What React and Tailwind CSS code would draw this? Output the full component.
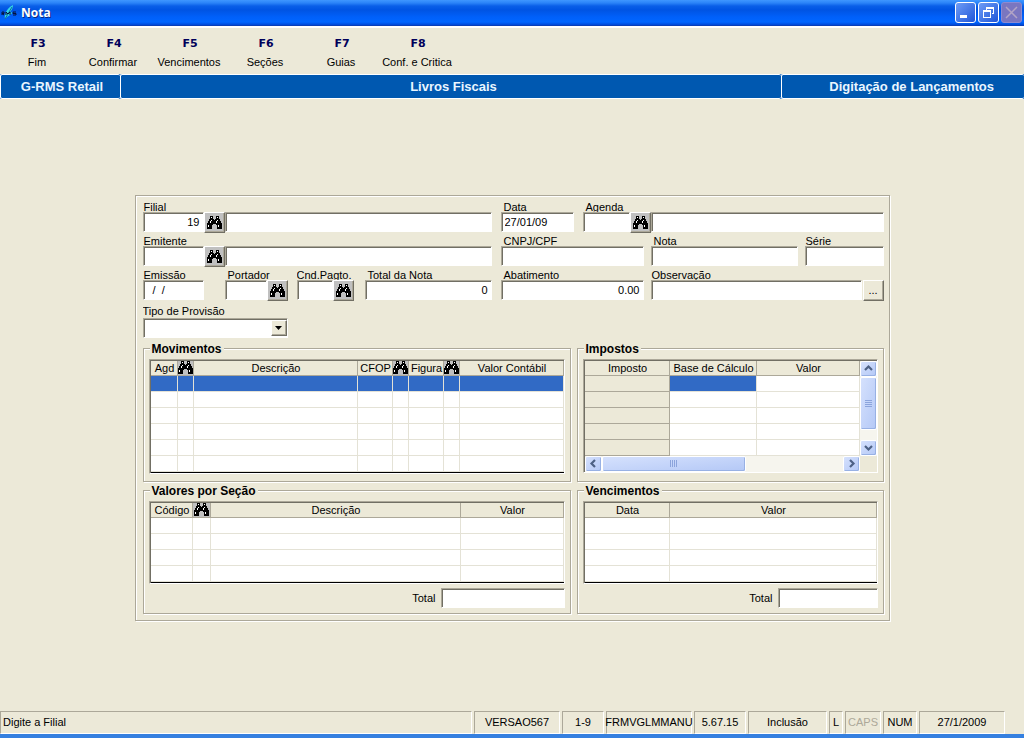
import clsx from "clsx";

/* ---------- shared class strings ---------- */
const etched = "border border-[#aca899] shadow-[1px_1px_0_#fff,inset_1px_1px_0_#fff]";
const sunken = "border border-t-[#aca899] border-l-[#aca899] border-r-white border-b-white shadow-[inset_1px_1px_0_#716f64]";
const raised = "border border-t-white border-l-white border-r-[#716f64] border-b-[#716f64] shadow-[inset_-1px_-1px_0_#aca899]";

const shortcuts = [
  { key: "F3", label: "Fim" },
  { key: "F4", label: "Confirmar" },
  { key: "F5", label: "Vencimentos" },
  { key: "F6", label: "Seções" },
  { key: "F7", label: "Guias" },
  { key: "F8", label: "Conf. e Critica" },
];

const statusItems = [
  { text: "VERSAO567", cls: "w-[86px]" },
  { text: "1-9", cls: "w-[42px]" },
  { text: "FRMVGLMMANU", cls: "w-[86px]" },
  { text: "5.67.15", cls: "w-[52px]" },
  { text: "Inclusão", cls: "w-[79px]" },
  { text: "L", cls: "w-[14px]" },
  { text: "CAPS", cls: "w-[36px] text-[#aca899]" },
  { text: "NUM", cls: "w-[34px]" },
  { text: "27/1/2009", cls: "w-[86px]" },
];

/* ---------- icons ---------- */
function Binoculars() {
  return (
    <svg width="15" height="13" viewBox="0 0 15 13" shapeRendering="crispEdges" className="mx-auto block shrink-0">
      <path
        d="M3 0h3v3h1v1h1v-1h1v-3h3v3h1v2h1v2h1v6h-5v-4h-1v-1h-3v1h-1v4h-5v-6h1v-2h1v-2h1z"
        fill="#000"
      />
      <path d="M4 1h1v1h-1zM10 1h1v1h-1zM4 4h1v1h-1zM3 5h1v2h-1zM10 4h1v1h-1zM9 5h1v2h-1zM1 9h1v2h-1zM11 9h1v2h-1z" fill="#fff" />
    </svg>
  );
}

function RmsLogo() {
  return (
    <svg width="18" height="18" viewBox="0 0 18 18" className="block shrink-0">
      <path d="M5 15 C4 10 7 4 13 1 C13 5 11 7 9 9 L13 8 C11 11 8 12 7 13 Z" fill="#35d6e6" />
      <path d="M5 15 L12 3" stroke="#0b6f9a" strokeWidth="1" />
      <path d="M2 11V8h2v1.500H2L4 11M6 11V8l2 2L10 8v3M16 8h-3v1.500h3V11h-3" stroke="#06123c" strokeWidth="1" fill="none" />
    </svg>
  );
}

function Chevron({ dir }) {
  const d = {
    up: "M1 6l3.500-3.500L8 6",
    down: "M1 3l3.500 3.500L8 3",
    left: "M6 1L2.500 4.500L6 8",
    right: "M3 1l3.500 3.500L3 8",
  }[dir];
  return (
    <svg width="9" height="9" viewBox="0 0 9 9" className="block">
      <path d={d} stroke="#4d6185" strokeWidth="2.200" fill="none" />
    </svg>
  );
}

/* ---------- form pieces ---------- */
function Label({ htmlFor, children, className = "pl-px leading-[18px]" }) {
  return (
    <label htmlFor={htmlFor} className={clsx("block h-[14px] overflow-hidden whitespace-nowrap", className)}>
      {children}
    </label>
  );
}

function TextBox({ className, ...props }) {
  return <input type="text" className={clsx(sunken, "block h-5 min-w-0 rounded-none bg-white px-[3px] outline-none", className)} {...props} />;
}

function SearchButton({ name, className }) {
  return (
    <button type="button" aria-label={name} className={clsx(raised, "flex h-[21px] w-[21px] shrink-0 items-center justify-center bg-[#c0c0c0]", className)}>
      <Binoculars />
    </button>
  );
}

function Group({ title, children }) {
  return (
    <section className={clsx(etched, "relative min-w-0 px-[5px] pt-[10px]")}>
      <h2 className="absolute -top-[7px] left-[6px] bg-[#ece9d8] px-[2px] text-[12px] leading-[14px] font-bold">{title}</h2>
      {children}
    </section>
  );
}

/* ---------- grids ---------- */
function Grid({ cols, rows, selectedRow, selectedCell, fixedFirst }) {
  return (
    <table className="w-full table-fixed border-separate border-spacing-0">
      <colgroup>
        {cols.map((c, i) => <col key={i} className={c.width} />)}
      </colgroup>
      <thead>
        <tr>
          {cols.map((c, i) => (
            <th
              key={i}
              className={clsx(
                "h-[15px] overflow-hidden border-r border-b border-[#aca899] p-0 text-center leading-[14px] font-normal whitespace-nowrap",
                c.icon ? "bg-[#c0c0c0]" : "bg-[#ece9d8] pl-[2px]"
              )}
            >
              {c.icon ? <Binoculars /> : c.title}
            </th>
          ))}
        </tr>
      </thead>
      <tbody>
        {Array.from({ length: rows }, (_, r) => (
          <tr key={r}>
            {cols.map((c, i) => {
              const selected = selectedRow === r || (selectedCell && selectedCell[0] === r && selectedCell[1] === i);
              const fixed = fixedFirst && i === 0;
              return (
                <td
                  key={i}
                  className={clsx(
                    "h-4 border-r border-b p-0",
                    fixed ? "border-[#aca899] bg-[#ece9d8]" : "border-[#e4e2d6]",
                    selected ? "bg-[#316ac5]" : !fixed && "bg-white"
                  )}
                />
              );
            })}
          </tr>
        ))}
      </tbody>
    </table>
  );
}

function GridFrame({ children, closed = true }) {
  return (
    <div className={clsx(sunken, "pt-px pl-px")}>
      <div className={clsx(closed && "border-b border-black")}>{children}</div>
    </div>
  );
}

const scrollPart = "flex shrink-0 items-center justify-center rounded-[2px] border border-white bg-linear-to-br from-[#d5e1fd] to-[#b4c8f6] shadow-[inset_-1px_-1px_0_#98b1e4]";

function VScroll() {
  return (
    <div className="flex w-[17px] shrink-0 flex-col bg-[#f6f5ee]">
      <button type="button" aria-label="Acima" className={clsx(scrollPart, "h-4")}><Chevron dir="up" /></button>
      <div className={clsx(scrollPart, "h-[53px] flex-col gap-px")}>
        {[0, 1, 2, 3].map((i) => <span key={i} className="h-px w-[7px] bg-[#8ba4dc]" />)}
      </div>
      <div className="flex-1" />
      <button type="button" aria-label="Abaixo" className={clsx(scrollPart, "h-4")}><Chevron dir="down" /></button>
    </div>
  );
}

function HScroll() {
  return (
    <div className="flex h-4 flex-1 bg-[#f6f5ee]">
      <button type="button" aria-label="Esquerda" className={clsx(scrollPart, "w-[17px]")}><Chevron dir="left" /></button>
      <div className={clsx(scrollPart, "w-[144px] gap-px")}>
        {[0, 1, 2, 3].map((i) => <span key={i} className="h-[7px] w-px bg-[#8ba4dc]" />)}
      </div>
      <div className="flex-1" />
      <button type="button" aria-label="Direita" className={clsx(scrollPart, "w-[17px]")}><Chevron dir="right" /></button>
    </div>
  );
}

/* ---------- window chrome ---------- */
function TitleBar() {
  const btn = "flex h-[21px] w-[21px] items-center justify-center rounded-[3px] border";
  return (
    <header className="flex h-[26px] items-center border-b border-[#0a3fb8] bg-[linear-gradient(to_bottom,#3f97ff_0,#2a83f8_3px,#0a5fe8_6px,#0054e3_10px,#0060fa_17px,#0066ff_22px,#0048d6_25px)] pr-[2px]">
      <RmsLogo />
      <h1 className="flex-1 pl-[3px] font-['Open_Sans',sans-serif] text-[12px] font-bold text-white [text-shadow:1px_1px_0_#0a2a80]">Nota</h1>
      <div className="flex gap-[2px]">
        <button type="button" aria-label="Minimizar" className={clsx(btn, "border-white bg-linear-to-br from-[#6f9cf5] to-[#1f54d8]")}>
          <svg width="15" height="15" viewBox="0 0 15 15"><path d="M2 10h7v3h-7z" fill="#fff" /></svg>
        </button>
        <button type="button" aria-label="Restaurar" className={clsx(btn, "border-white bg-linear-to-br from-[#6f9cf5] to-[#1f54d8]")}>
          <svg width="15" height="15" viewBox="0 0 15 15" shapeRendering="crispEdges">
            <path d="M5 2h8v7h-2v-1h1v-4h-6v1h-1zM2 5h8v8h-8zM3 7v5h6v-5z" fill="#fff" fillRule="evenodd" />
          </svg>
        </button>
        <button type="button" aria-label="Fechar" disabled className={clsx(btn, "border-[#8d8ad0] bg-[#7a76c0]")}>
          <svg width="15" height="15" viewBox="0 0 15 15"><path d="M2 2l11 11M13 2l-11 11" stroke="#b3a5c6" strokeWidth="1.500" /></svg>
        </button>
      </div>
    </header>
  );
}

function Toolbar() {
  return (
    <nav className="flex h-12 border-t-2 border-white pt-[9px]">
      {shortcuts.map((s) => (
        <button key={s.key} type="button" className="flex w-[76px] flex-col items-center gap-[4px] whitespace-nowrap">
          <span className="font-['DejaVu_Sans',sans-serif] text-[11px] leading-[14px] font-bold text-[#00005a]">{s.key}</span>
          <span className="pr-[2px] leading-[14px]">{s.label}</span>
        </button>
      ))}
    </nav>
  );
}

function Banner() {
  const cell = "flex items-center border-y border-l border-white rounded-[2px] pt-px";
  return (
    <div className="flex h-[25px] bg-[#0058b0] text-[13px] font-bold text-[#eaf6ff]">
      <div className={clsx(cell, "w-[120px] justify-center pl-[3px]")}>G-RMS Retail</div>
      <div className={clsx(cell, "flex-1 justify-center pl-[5px]")}>Livros Fiscais</div>
      <div className={clsx(cell, "w-[243px] justify-end pr-[30px]")}>Digitação de Lançamentos</div>
    </div>
  );
}

function StatusBar() {
  const cell = "h-[23px] shrink-0 border border-t-[#aca899] border-l-[#aca899] border-r-white border-b-white leading-[20px] whitespace-nowrap";
  return (
    <footer className="flex gap-[2px] border-b-4 border-[#3580e0] pr-[19px]">
      <div className={clsx(cell, "flex-1 pl-[2px]")}>Digite a Filial</div>
      {statusItems.map((s) => (
        <div key={s.text} className={clsx(cell, "flex justify-center", s.cls)}>{s.text}</div>
      ))}
    </footer>
  );
}

/* ---------- note header fields ---------- */
const indented = "pl-[3px] leading-[18px]";

function NoteFields() {
  return (
    <div className="grid grid-cols-[349fr_383fr] gap-x-[9px]">
      {/* Filial / Data / Agenda */}
      <div>
        <Label htmlFor="filial">Filial</Label>
        <div className="flex h-5">
          <TextBox id="filial" defaultValue="19" className="w-[61px] text-right" />
          <SearchButton name="Buscar filial" />
          <TextBox aria-label="Nome da filial" className="flex-1" />
        </div>
      </div>
      <div className="flex">
        <div className="w-[73px]">
          <Label htmlFor="data" className={indented}>Data</Label>
          <TextBox id="data" defaultValue="27/01/09" className="w-full" />
        </div>
        <div className="ml-[9px] flex-1">
          <Label htmlFor="agenda" className={indented}>Agenda</Label>
          <div className="flex h-5">
            <TextBox id="agenda" className="w-[47px]" />
            <SearchButton name="Buscar agenda" />
            <TextBox aria-label="Nome da agenda" className="flex-1" />
          </div>
        </div>
      </div>

      {/* Emitente / CNPJ / Nota / Série */}
      <div>
        <Label htmlFor="emitente">Emitente</Label>
        <div className="flex h-5">
          <TextBox id="emitente" className="w-[61px]" />
          <SearchButton name="Buscar emitente" />
          <TextBox aria-label="Nome do emitente" className="flex-1" />
        </div>
      </div>
      <div className="flex gap-[7px]">
        <div className="w-[143px]">
          <Label htmlFor="cnpj" className={indented}>CNPJ/CPF</Label>
          <TextBox id="cnpj" className="w-full" />
        </div>
        <div className="flex-1">
          <Label htmlFor="nota" className={indented}>Nota</Label>
          <TextBox id="nota" className="w-full" />
        </div>
        <div className="w-[79px]">
          <Label htmlFor="serie">Série</Label>
          <TextBox id="serie" className="w-full" />
        </div>
      </div>

      {/* Emissão / Portador / Condição / Totais / Observação */}
      <div className="flex">
        <div className="w-[61px]">
          <Label htmlFor="emissao">Emissão</Label>
          <TextBox id="emissao" defaultValue="  /  /" className="w-full" />
        </div>
        <div className="ml-[21px] w-[63px]">
          <Label htmlFor="portador" className={indented}>Portador</Label>
          <div className="flex h-5">
            <TextBox id="portador" className="flex-1" />
            <SearchButton name="Buscar portador" />
          </div>
        </div>
        <div className="ml-[9px] w-[57px]">
          <Label htmlFor="cndpagto" className="leading-[18px]">Cnd.Pagto.</Label>
          <div className="flex h-5">
            <TextBox id="cndpagto" className="flex-1" />
            <SearchButton name="Buscar condição" />
          </div>
        </div>
        <div className="ml-[11px] flex-1">
          <Label htmlFor="total-nota" className={indented}>Total da Nota</Label>
          <TextBox id="total-nota" defaultValue="0" className="w-full text-right" />
        </div>
      </div>
      <div className="flex gap-[7px]">
        <div className="w-[143px]">
          <Label htmlFor="abatimento" className={indented}>Abatimento</Label>
          <TextBox id="abatimento" defaultValue="0.00" className="w-full text-right" />
        </div>
        <div className="flex-1">
          <Label htmlFor="obs">Observação</Label>
          <div className="flex h-5 gap-px">
            <TextBox id="obs" className="flex-1" />
            <button type="button" className={clsx(raised, "h-[21px] w-[21px] shrink-0 bg-[#ece9d8] leading-[18px]")}>...</button>
          </div>
        </div>
      </div>

      {/* Tipo de Provisão */}
      <div className="pt-1">
        <Label htmlFor="provisao" className="leading-[14px]">Tipo de Provisão</Label>
        <div className="relative w-[145px]">
          <select id="provisao" className={clsx(sunken, "block h-5 w-full appearance-none rounded-none bg-white px-[3px] outline-none")} />
          <span className={clsx(raised, "pointer-events-none absolute top-[2px] right-px flex h-4 w-4 items-center justify-center bg-[#ece9d8]")}>
            <svg width="7" height="4" viewBox="0 0 7 4"><path d="M0 0h7L3.500 4z" fill="#000" /></svg>
          </span>
        </div>
      </div>
    </div>
  );
}

const movimentosCols = [
  { title: "Agd", width: "w-[27px]" },
  { icon: true, width: "w-4" },
  { title: "Descrição" },
  { title: "CFOP", width: "w-[35px]" },
  { icon: true, width: "w-4" },
  { title: "Figura", width: "w-[35px]" },
  { icon: true, width: "w-4" },
  { title: "Valor Contábil", width: "w-[104px]" },
];

const impostosCols = [
  { title: "Imposto", width: "w-[85px]" },
  { title: "Base de Cálculo", width: "w-[87px]" },
  { title: "Valor" },
];

const secaoCols = [
  { title: "Código", width: "w-[42px]" },
  { icon: true, width: "w-[18px]" },
  { title: "Descrição" },
  { title: "Valor", width: "w-[103px]" },
];

const vencimentosCols = [
  { title: "Data", width: "w-[85px]" },
  { title: "Valor" },
];

function TotalRow({ id, width }) {
  return (
    <div className="mt-1 mb-[5px] flex items-center justify-end gap-[5px]">
      <label htmlFor={id} className="pt-[2px]">Total</label>
      <TextBox id={id} className={width} />
    </div>
  );
}

export default function App() {
  return (
    <div className="flex min-h-screen flex-col bg-[#ece9d8] font-['Liberation_Sans',Arial,sans-serif] text-[11px] text-black">
      <TitleBar />
      <Toolbar />
      <Banner />

      <main className="flex flex-1 items-center justify-center pt-[5px]">
        <form className={clsx(etched, "w-full max-w-[755px] pt-[2px] pr-[5px] pb-[6px] pl-[7px]")}>
          <NoteFields />

          <div className="mt-[10px] grid grid-cols-[428fr_307fr] gap-x-[6px] gap-y-[8px]">
            <Group title="Movimentos">
              <div className="pb-[7px]">
                <GridFrame><Grid cols={movimentosCols} rows={6} selectedRow={0} /></GridFrame>
              </div>
            </Group>

            <Group title="Impostos">
              <GridFrame closed={false}>
                <div className="flex">
                  <div className="min-w-0 flex-1">
                    <Grid cols={impostosCols} rows={5} selectedCell={[0, 1]} fixedFirst />
                  </div>
                  <VScroll />
                </div>
                <div className="flex pr-[17px]"><HScroll /></div>
              </GridFrame>
            </Group>

            <Group title="Valores por Seção">
              <GridFrame><Grid cols={secaoCols} rows={4} /></GridFrame>
              <TotalRow id="total-secao" width="w-[124px]" />
            </Group>

            <Group title="Vencimentos">
              <GridFrame><Grid cols={vencimentosCols} rows={4} /></GridFrame>
              <TotalRow id="total-venc" width="w-[100px]" />
            </Group>
          </div>
        </form>
      </main>

      <StatusBar />
    </div>
  );
}
